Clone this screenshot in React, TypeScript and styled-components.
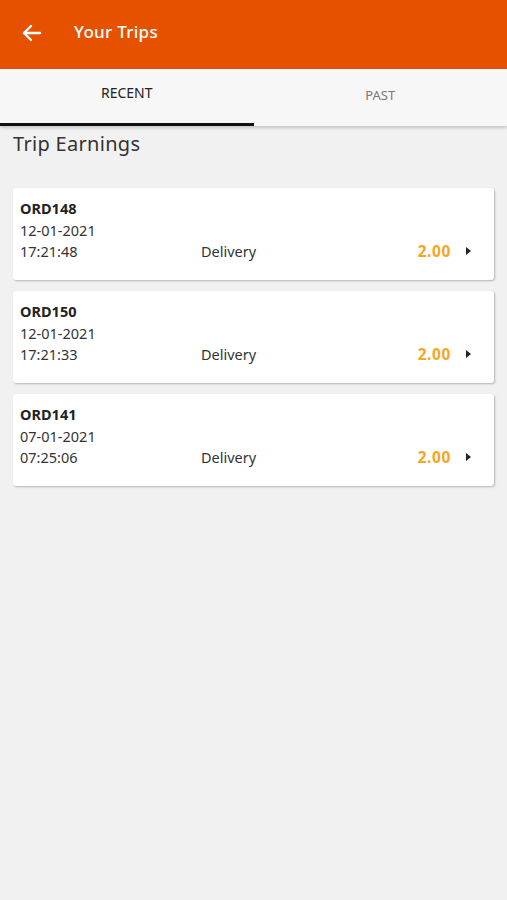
import styled, { createGlobalStyle } from 'styled-components';

const GlobalStyle = createGlobalStyle`
  body {
    margin: 0;
    background: #f1f1f1;
    font-family: 'Noto Sans', 'Open Sans', sans-serif;
  }
`;

const Page = styled.div`
  min-height: 900px;
  background: #f1f1f1;
`;

const Header = styled.header`
  height: 69px;
  background: #e65100;
  display: flex;
  align-items: center;
  padding-left: 20px;
  gap: 30px;
  color: #fff;
`;

const HeaderTitle = styled.h1`
  margin: 0;
  font-size: 17px;
  font-weight: 500;
  letter-spacing: 0.3px;
  margin-top: -6px;
`;

const Tabs = styled.nav`
  display: flex;
  height: 57px;
  background: #f7f7f7;
  box-shadow: 0 2px 3px rgba(0, 0, 0, 0.18);
`;

const Tab = styled.div<{ $active?: boolean }>`
  flex: 1;
  display: flex;
  align-items: center;
  justify-content: center;
  padding-bottom: ${(p) => (p.$active ? '8px' : '2px')};
  font-size: ${(p) => (p.$active ? '14px' : '13px')};
  color: ${(p) => (p.$active ? '#222' : '#777')};
  border-bottom: 3px solid ${(p) => (p.$active ? '#111' : 'transparent')};
`;

const Title = styled.h2`
  margin: 4px 0 0 13px;
  font-size: 20px;
  font-weight: 400;
  color: #333;
  letter-spacing: 0.3px;
`;

const List = styled.div`
  display: flex;
  flex-direction: column;
  gap: 11px;
  padding: 31px 13px 0;
`;

const Card = styled.div`
  background: #fff;
  border-radius: 3px;
  box-shadow: 1px 1px 2px rgba(0, 0, 0, 0.25);
  padding: 10px 23px 17.5px 7px;
  font-size: 14.5px;
  color: #333;
  line-height: 21.5px;
`;

const OrderId = styled.div`
  font-weight: 700;
  color: #222;
`;

const Row = styled.div`
  display: flex;
  align-items: center;
`;

const Time = styled.span`
  width: 181px;
`;

const Type = styled.span`
  flex: 1;
`;

const Amount = styled.span`
  color: #f5a623;
  font-weight: 700;
  font-size: 15.5px;
  letter-spacing: 0.6px;
  margin-right: 15px;
`;

const Caret = styled.span`
  width: 0;
  height: 0;
  border-top: 4px solid transparent;
  border-bottom: 4px solid transparent;
  border-left: 5px solid #222;
  margin-top: -2px;
`;

const trips = [
  { id: 'ORD148', date: '12-01-2021', time: '17:21:48', type: 'Delivery', amount: '2.00' },
  { id: 'ORD150', date: '12-01-2021', time: '17:21:33', type: 'Delivery', amount: '2.00' },
  { id: 'ORD141', date: '07-01-2021', time: '07:25:06', type: 'Delivery', amount: '2.00' },
];

export default function App() {
  return (
    <Page>
      <GlobalStyle />
      <Header>
        <svg width="24" height="24" viewBox="0 0 24 24" fill="none" stroke="#fff" strokeWidth="2.4" strokeLinecap="round" strokeLinejoin="round" style={{ marginTop: -4 }}>
          <path d="M20 12H4" />
          <path d="M11 5l-7 7 7 7" />
        </svg>
        <HeaderTitle>Your Trips</HeaderTitle>
      </Header>
      <Tabs>
        <Tab $active>RECENT</Tab>
        <Tab>PAST</Tab>
      </Tabs>
      <Title>Trip Earnings</Title>
      <List>
        {trips.map((t) => (
          <Card key={t.id}>
            <OrderId>{t.id}</OrderId>
            <div>{t.date}</div>
            <Row>
              <Time>{t.time}</Time>
              <Type>{t.type}</Type>
              <Amount>{t.amount}</Amount>
              <Caret />
            </Row>
          </Card>
        ))}
      </List>
    </Page>
  );
}
